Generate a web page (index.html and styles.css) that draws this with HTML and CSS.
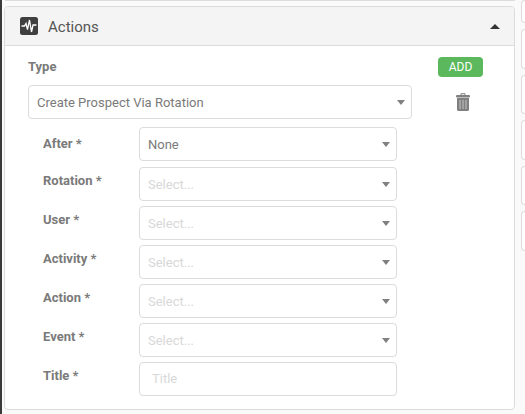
FILE: index.html
```html
<!DOCTYPE html>
<html>
  <head>
    <title>Actions</title>
    <link rel="stylesheet" href="styles.css">
  </head>
  <body>
    <div class="page">
      <div class="main-col">
        <div class="prev-panel"></div>
        <div class="panel">
          <div class="panel-head">
            <span class="head-icon">
              <svg width="18" height="18" viewBox="0 0 18 18">
                <rect width="18" height="18" rx="2.5" fill="#3f3f3f"/>
                <path d="M1.500 9H4.500L6 6.500 7.500 12.500 9.500 3 11.500 15 13 8H16.500" fill="none" stroke="#fff" stroke-width="1.300"/>
              </svg>
            </span>
            <span class="panel-title">Actions</span>
            <span class="caret-up"></span>
          </div>
          <div class="panel-body">
            <div class="type-row">
              <div class="type-main">
                <label class="type-label">Type</label>
                <div class="field field-wide">
                  <span>Create Prospect Via Rotation</span>
                  <i class="caret"></i>
                </div>
              </div>
              <div class="type-side">
                <button class="add-btn">ADD</button>
                <svg class="trash" width="14" height="18" viewBox="0 0 14 18">
                  <path d="M5 2.500V.700h4v1.800" fill="none" stroke="#808080" stroke-width="1"/>
                  <rect y="2" width="14" height="2.500" rx="1" fill="#808080"/>
                  <path d="M1 5h12v11.500a1.500 1.500 0 0 1-1.500 1.500h-9A1.500 1.500 0 0 1 1 16.500z" fill="#808080"/>
                  <path d="M4 7v9M7 7v9M10 7v9" stroke="#b5b5b5" stroke-width="1.300"/>
                </svg>
              </div>
            </div>
            <div class="row first">
              <label>After *</label>
              <div class="field"><span>None</span><i class="caret"></i></div>
            </div>
            <div class="row">
              <label>Rotation *</label>
              <div class="field empty"><span>Select...</span><i class="caret"></i></div>
            </div>
            <div class="row">
              <label>User *</label>
              <div class="field empty"><span>Select...</span><i class="caret"></i></div>
            </div>
            <div class="row">
              <label>Activity *</label>
              <div class="field empty"><span>Select...</span><i class="caret"></i></div>
            </div>
            <div class="row">
              <label>Action *</label>
              <div class="field empty"><span>Select...</span><i class="caret"></i></div>
            </div>
            <div class="row">
              <label>Event *</label>
              <div class="field empty"><span>Select...</span><i class="caret"></i></div>
            </div>
            <div class="row">
              <label>Title *</label>
              <div class="field empty title-field"><span>Title</span></div>
            </div>
          </div>
        </div>
      </div>
      <div class="side-cards">
        <div class="side-card one"></div>
        <div class="side-card"></div>
        <div class="side-card"></div>
        <div class="side-card"></div>
        <div class="side-card"></div>
        <div class="side-card"></div>
      </div>
    </div>
  </body>
</html>
```
FILE: styles.css
```css
html, body {
  margin: 0;
  padding: 0;
}
body {
  width: 525px;
  height: 414px;
  overflow: hidden;
  background-color: #fafafa;
  font-family: Roboto, "Liberation Sans", sans-serif;
  color: #7a7a7a;
  font-size: 13px;
}
.page {
  display: flex;
  height: 414px;
  box-sizing: border-box;
  border-left: 2px solid #3a3a3a;
  overflow: hidden;
}
.main-col {
  width: 511px;
  margin-left: 2px;
  flex-shrink: 0;
}
.prev-panel {
  height: 1px;
  margin-left: 1px;
  background: #dcdcdc;
}
.panel {
  height: 404px;
  margin-top: 5px;
  box-sizing: border-box;
  background: #fff;
  border: 1px solid #dcdcdc;
  border-radius: 4px;
}
.panel-head {
  display: flex;
  align-items: center;
  height: 38px;
  padding: 0 14px 0 15px;
  background: #f4f4f4;
  border-bottom: 1px solid #dcdcdc;
  border-radius: 4px 4px 0 0;
}
.head-icon {
  display: flex;
  margin-right: 10px;
}
.panel-title {
  font-size: 15px;
  color: #555;
  padding-top: 2px;
}
.caret-up {
  margin: 1px 0 0 auto;
  width: 0;
  height: 0;
  border-left: 5.500px solid transparent;
  border-right: 5.500px solid transparent;
  border-bottom: 5px solid #333;
}
.panel-body {
  padding: 13px 0 0 23px;
}
.type-row {
  display: flex;
}
.type-main {
  width: 384px;
}
.type-label {
  display: block;
  font-weight: 700;
  height: 26px;
  line-height: 16px;
}
.type-side {
  display: flex;
  flex-direction: column;
  align-items: center;
  margin: -2px 0 0 26px;
  width: 45px;
}
.add-btn {
  width: 45px;
  height: 20px;
  padding: 0;
  border: none;
  border-radius: 4px;
  background: #5cb85c;
  color: #fff;
  font: 400 12px Roboto, sans-serif;
}
.trash {
  margin: 16px 0 0 5px;
}
.field {
  position: relative;
  display: flex;
  align-items: center;
  box-sizing: border-box;
  width: 258px;
  height: 34px;
  padding-left: 8px;
  border: 1px solid #dcdcdc;
  border-radius: 4px;
  background: #fff;
  color: #7a7a7a;
}
.field-wide {
  width: 384px;
}
.empty {
  color: #d8d8d8;
}
.title-field {
  padding: 0 0 1px 12px;
}
.caret {
  position: absolute;
  right: 6px;
  top: 14px;
  width: 0;
  height: 0;
  border-left: 4px solid transparent;
  border-right: 4px solid transparent;
  border-top: 5px solid #808080;
}
.row {
  display: flex;
  margin-left: 15px;
  height: 39px;
}
.row label {
  width: 96px;
  font-weight: 700;
  line-height: 16px;
  padding-top: 6px;
}
.row.first {
  height: 40px;
  margin-top: 8px;
}
.row.first label {
  padding-top: 9px;
}
.side-cards {
  display: flex;
  flex-direction: column;
  gap: 6px;
  margin-left: 6px;
  width: 10px;
  flex-shrink: 0;
}
.side-card {
  height: 39.500px;
  flex-shrink: 0;
  background: #fff;
  border: 1px solid #dcdcdc;
  border-right: none;
  border-radius: 4px 0 0 4px;
  box-sizing: border-box;
}
.side-card.one {
  height: 23px;
}
```
